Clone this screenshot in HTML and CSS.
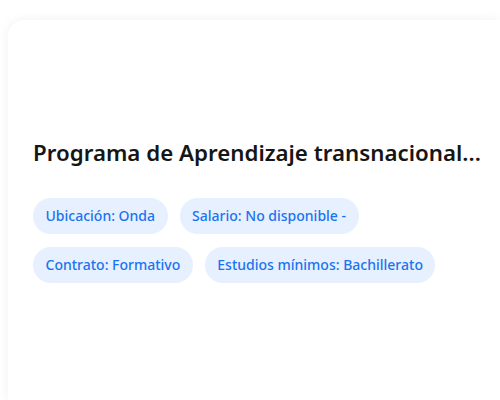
FILE: index.html
```html
<!DOCTYPE html>
<html lang="es">
<head>
    <meta charset="UTF-8">
    <meta name="viewport" content="width=device-width, initial-scale=1.0">
    <title>Oferta</title>
    <link rel="stylesheet" href="styles.css">
</head>
<body>
    <div class="card">
        <h2 class="card-title">Programa de Aprendizaje transnacional...</h2>
        <div class="tags">
            <span class="tag">Ubicación: Onda</span>
            <span class="tag">Salario: No disponible -</span>
            <span class="tag">Contrato: Formativo</span>
            <span class="tag">Estudios mínimos: Bachillerato</span>
        </div>
    </div>
</body>
</html>
```

FILE: styles.css
```css
html, body {
    height: 100%;
}
body {
    margin: 0;
    padding: 20px 0 0 8px;
    box-sizing: border-box;
    background: #ffffff;
    font-family: "Noto Sans", "Open Sans", sans-serif;
    overflow: hidden;
}
.card {
    background: #ffffff;
    border-radius: 16px 0 0 0;
    box-shadow: 0 0 12px rgba(0,0,0,0.06);
    height: 100%;
    padding: 117px 25px 0 25px;
    box-sizing: border-box;
}
.card-title {
    margin: 0 0 30px 0;
    font-size: 22.3px;
    font-weight: 600;
    color: #161616;
    white-space: nowrap;
}
.tags {
    display: flex;
    flex-wrap: wrap;
    gap: 13px 12px;
    width: 440px;
}
.tag {
    background: #e6f0ff;
    color: #1a73f0;
    font-size: 14px;
    font-weight: 500;
    height: 36px;
    line-height: 36px;
    padding: 0 12.5px;
    border-radius: 18px;
}
```
